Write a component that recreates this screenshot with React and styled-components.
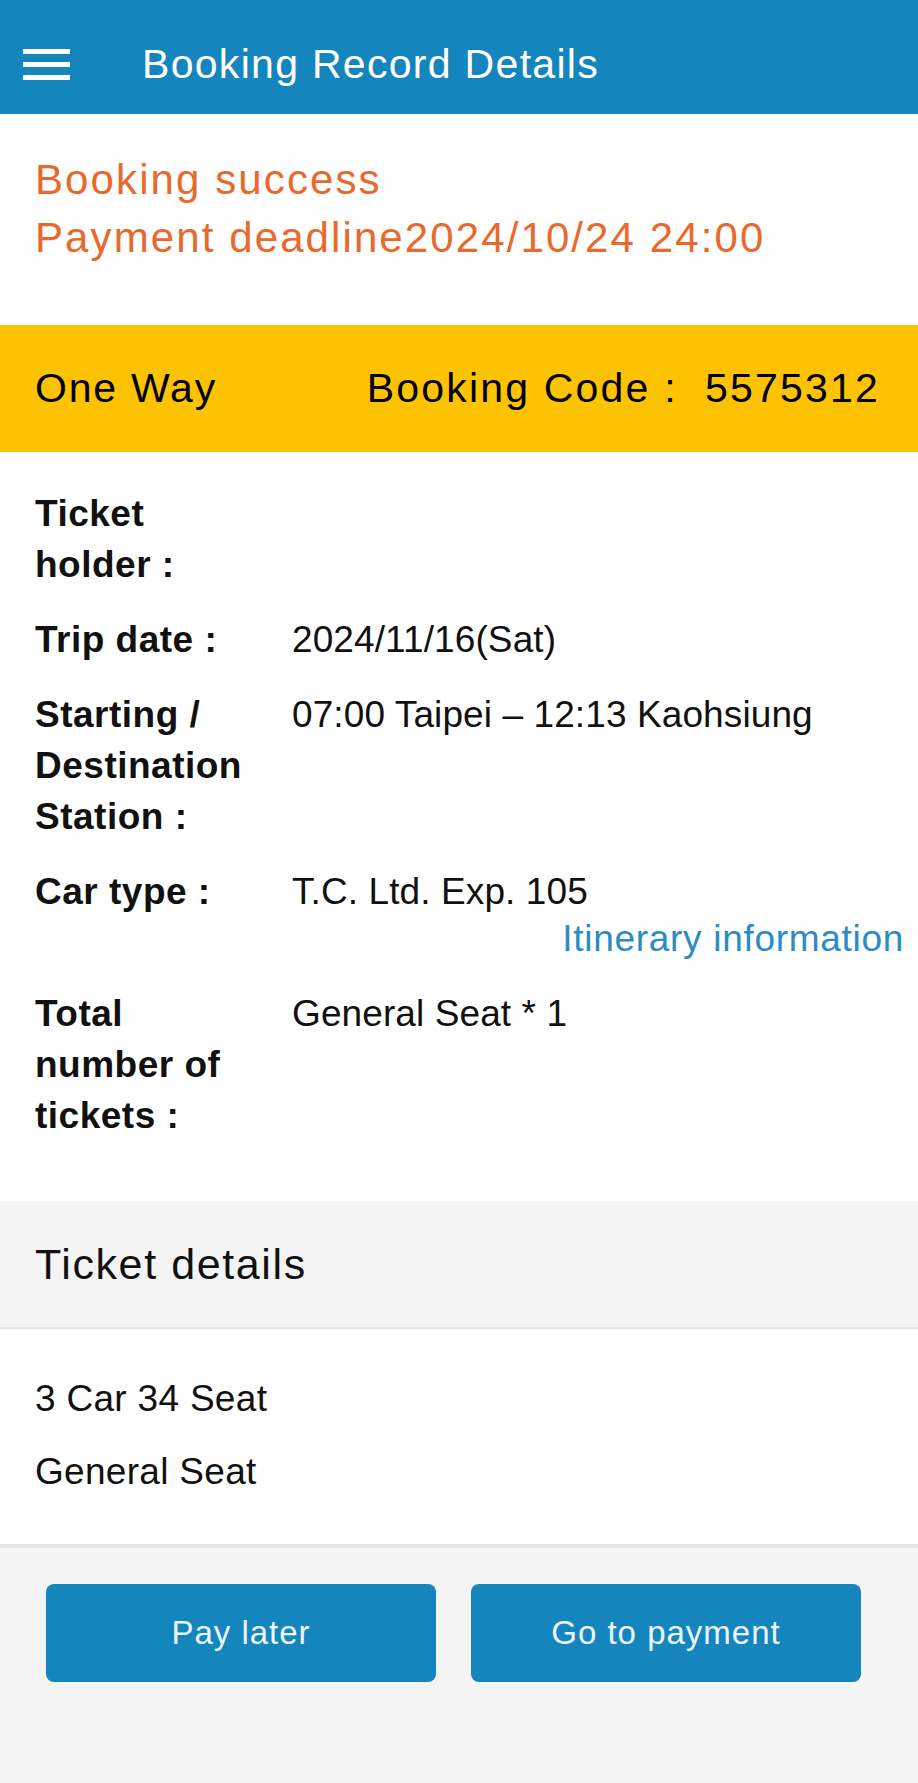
import React from 'react';
import styled, { createGlobalStyle } from 'styled-components';

const GlobalStyle = createGlobalStyle`
  html, body {
    margin: 0;
    padding: 0;
    background: #f4f4f4;
    font-family: "Liberation Sans", Arial, "Noto Sans CJK TC", sans-serif;
    color: #111;
  }
`;

const Page = styled.div`
  min-height: 1783px;
  background: #f4f4f4;
`;

const Header = styled.header`
  display: flex;
  align-items: center;
  box-sizing: border-box;
  height: 114px;
  padding: 14px 0 0 23px;
  background: #1586bd;
  color: #fff;
`;

const Burger = styled.button`
  display: flex;
  flex-direction: column;
  gap: 8px;
  width: 47px;
  padding: 0;
  border: none;
  background: none;
  margin-right: 72px;

  span {
    display: block;
    height: 5px;
    background: #fff;
  }
`;

const Title = styled.h1`
  margin: 0;
  font-size: 41px;
  font-weight: 400;
  letter-spacing: 1.3px;
`;

const Status = styled.section`
  background: #fff;
  padding: 37px 35px 58px;
  color: #e8692b;
  font-size: 42px;
  line-height: 58px;
  letter-spacing: 2.1px;
`;

const TripBar = styled.div`
  display: flex;
  justify-content: space-between;
  align-items: center;
  height: 127px;
  padding: 0 38px 0 35px;
  background: #fdc300;
  font-size: 41px;
  letter-spacing: 1.8px;
  color: #000;
`;

const Code = styled.span`
  letter-spacing: 2.2px;
`;

const Details = styled.section`
  display: grid;
  grid-template-columns: 225px 1fr;
  column-gap: 32px;
  row-gap: 24px;
  padding: 36px 14px 60px 35px;
  background: #fff;
  line-height: 51px;
`;

const Label = styled.div`
  font-size: 37px;
  font-weight: 700;
  letter-spacing: 0.5px;
`;

const Value = styled.div`
  font-size: 37px;
  letter-spacing: 0.1px;
`;

const Link = styled.a`
  display: block;
  margin-top: -4px;
  text-align: right;
  color: #2b8bc3;
  text-decoration: none;
  letter-spacing: 0.7px;
`;

const SectionHead = styled.div`
  display: flex;
  align-items: center;
  height: 126px;
  padding-left: 35px;
  border-bottom: 2px solid #e4e4e4;
  font-size: 43px;
  letter-spacing: 1.6px;
`;

const SeatList = styled.div`
  display: flex;
  flex-direction: column;
  gap: 23px;
  padding: 45px 35px 47px;
  background: #fff;
  border-bottom: 4px solid #e6e6e6;
  font-size: 37px;
  line-height: 50px;
  letter-spacing: 0.3px;
`;

const Actions = styled.div`
  display: grid;
  grid-template-columns: 390px 390px;
  column-gap: 35px;
  padding: 36px 0 0 46px;
`;

const ActionButton = styled.button`
  height: 98px;
  border: none;
  border-radius: 8px;
  background: #1586bd;
  color: #eaf5fb;
  font-family: inherit;
  font-size: 33px;
  letter-spacing: 1px;
`;

const rows = [
  { label: 'Ticket holder', value: '' },
  { label: 'Trip date', value: '2024/11/16(Sat)' },
  { label: 'Starting / Destination Station', value: '07:00 Taipei – 12:13 Kaohsiung' },
  { label: 'Car type', value: 'T.C. Ltd. Exp. 105', link: 'Itinerary information' },
  { label: 'Total number of tickets', value: 'General Seat * 1' },
];

const App = () => (
  <Page>
    <GlobalStyle />
    <Header>
      <Burger aria-label="menu">
        <span />
        <span />
        <span />
      </Burger>
      <Title>Booking Record Details</Title>
    </Header>

    <Status>
      <div>Booking success</div>
      <div>Payment deadline2024/10/24 24:00</div>
    </Status>

    <TripBar>
      <span>One Way</span>
      <Code>{'Booking Code\u00a0:\u00a0 5575312'}</Code>
    </TripBar>

    <Details>
      {rows.map((r) => (
        <React.Fragment key={r.label}>
          <Label>{`${r.label}\u00a0:`}</Label>
          <Value>
            {r.value}
            {r.link && <Link href="#">{r.link}</Link>}
          </Value>
        </React.Fragment>
      ))}
    </Details>

    <SectionHead>Ticket details</SectionHead>
    <SeatList>
      <div>3 Car 34 Seat</div>
      <div>General Seat</div>
    </SeatList>

    <Actions>
      <ActionButton>Pay later</ActionButton>
      <ActionButton>Go to payment</ActionButton>
    </Actions>
  </Page>
);

export default App;
